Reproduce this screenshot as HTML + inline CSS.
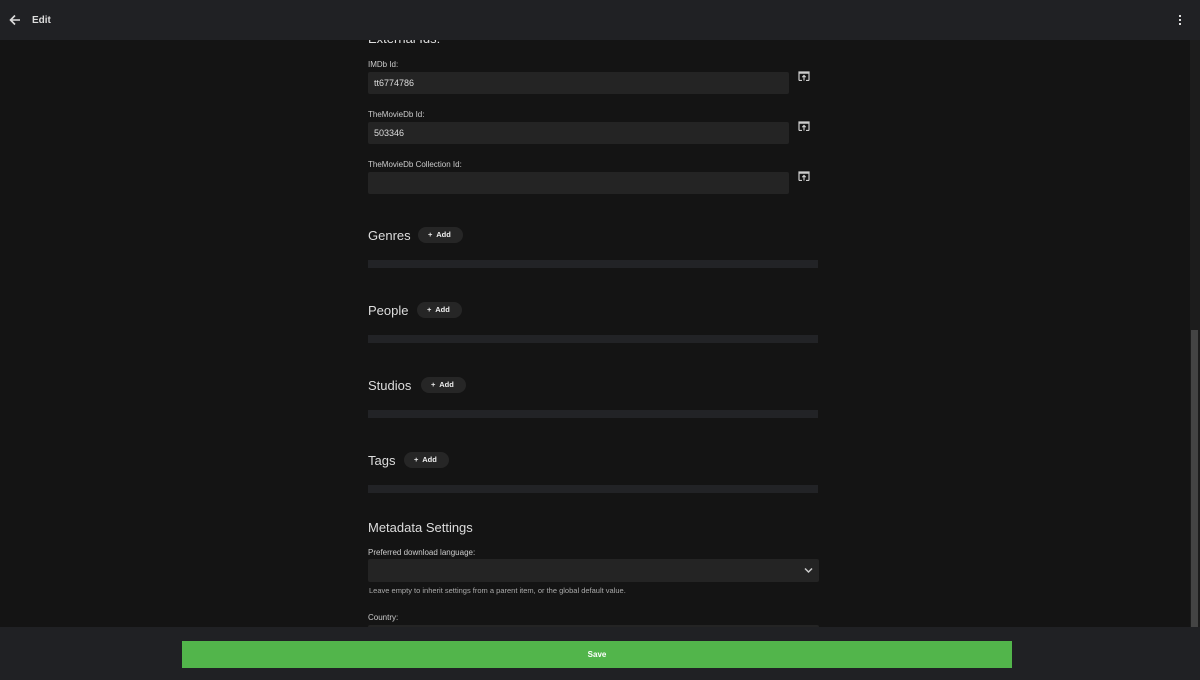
<!DOCTYPE html>
<html><head><style>
*{margin:0;padding:0;box-sizing:border-box}
body{width:1200px;height:680px;background:#141414;font-family:"Liberation Sans",sans-serif;color:#ddd;position:relative;overflow:hidden}
.a{position:absolute}
.hdr{left:0;top:0;width:1200px;height:40px;background:#202124}
.lbl{font-size:8px;color:#ccc;left:368px}
.inp{left:368px;width:421px;height:22px;background:#242424;border-radius:2px;font-size:9px;color:#ddd;padding:6px 6px}
.h2{left:368px;font-size:13px;color:#ddd}
.btn{height:16px;background:#262626;border-radius:8px;font-size:7.5px;font-weight:bold;color:#eee;padding:3px 0 0 10px}
.bar{left:368px;width:450px;height:8px;background:#222326}
</style></head><body>
<div class="a" style="left:368px;top:31px;font-size:13px;color:#ddd">External Ids:</div>
<div class="a hdr"></div>
<svg class="a" style="left:9px;top:14px" width="12" height="12" viewBox="0 0 12 12"><path d="M11 6H2M6 1.5L1.5 6 6 10.5" stroke="#ddd" stroke-width="1.6" fill="none"/></svg>
<div class="a" style="left:32px;top:15px;font-size:10px;font-weight:bold;color:#ddd">Edit</div>
<div class="a" style="left:1179px;top:15px;width:2px;height:2px;background:#ddd;box-shadow:0 4px #ddd,0 8px #ddd"></div>

<div class="a lbl" style="top:60px">IMDb Id:</div>
<div class="a inp" style="top:72px">tt6774786</div>
<div class="a lbl" style="top:110px">TheMovieDb Id:</div>
<div class="a inp" style="top:122px">503346</div>
<div class="a lbl" style="top:160px">TheMovieDb Collection Id:</div>
<div class="a inp" style="top:172px"></div>
<svg class="a" style="left:798px;top:71px" width="12" height="10" viewBox="0 0 12 10"><path d="M1 9.5V1h10v8.5M1 2.2h10M4 9.5H1M8 9.5h3M6 9.5V4.5M4.3 6.2L6 4.5 7.7 6.2" stroke="#ccc" stroke-width="1.2" fill="none"/></svg>
<svg class="a" style="left:798px;top:121px" width="12" height="10" viewBox="0 0 12 10"><path d="M1 9.5V1h10v8.5M1 2.2h10M4 9.5H1M8 9.5h3M6 9.5V4.5M4.3 6.2L6 4.5 7.7 6.2" stroke="#ccc" stroke-width="1.2" fill="none"/></svg>
<svg class="a" style="left:798px;top:171px" width="12" height="10" viewBox="0 0 12 10"><path d="M1 9.5V1h10v8.5M1 2.2h10M4 9.5H1M8 9.5h3M6 9.5V4.5M4.3 6.2L6 4.5 7.7 6.2" stroke="#ccc" stroke-width="1.2" fill="none"/></svg>

<div class="a h2" style="top:228px">Genres</div>
<div class="a btn" style="left:418px;top:227px;width:45px">+&nbsp; Add</div>
<div class="a bar" style="top:260px"></div>
<div class="a h2" style="top:303px">People</div>
<div class="a btn" style="left:417px;top:302px;width:45px">+&nbsp; Add</div>
<div class="a bar" style="top:335px"></div>
<div class="a h2" style="top:378px">Studios</div>
<div class="a btn" style="left:421px;top:377px;width:45px">+&nbsp; Add</div>
<div class="a bar" style="top:410px"></div>
<div class="a h2" style="top:453px">Tags</div>
<div class="a btn" style="left:404px;top:452px;width:45px">+&nbsp; Add</div>
<div class="a bar" style="top:485px"></div>

<div class="a h2" style="top:520px">Metadata Settings</div>
<div class="a lbl" style="top:548px">Preferred download language:</div>
<div class="a inp" style="top:559px;width:451px;height:23px"></div>
<svg class="a" style="left:804px;top:567px" width="9" height="7" viewBox="0 0 9 7"><path d="M1 1.5l3.5 3.5 3.5-3.5" stroke="#ccc" stroke-width="1.5" fill="none"/></svg>
<div class="a" style="left:369px;top:586px;font-size:7.5px;color:#aaa">Leave empty to inherit settings from a parent item, or the global default value.</div>
<div class="a lbl" style="top:613px">Country:</div>
<div class="a inp" style="top:625px;width:451px"></div>

<div class="a" style="left:1190px;top:40px;width:10px;height:588px;background:#1c1c1c"></div>
<div class="a" style="left:1191px;top:330px;width:7px;height:298px;background:#444"></div>
<div class="a" style="left:0;top:627px;width:1200px;height:53px;background:#202124"></div>
<div class="a" style="left:182px;top:641px;width:830px;height:27px;background:#52b54b;color:#fff;font-size:8px;font-weight:bold;text-align:center;line-height:27px">Save</div>
</body></html>
